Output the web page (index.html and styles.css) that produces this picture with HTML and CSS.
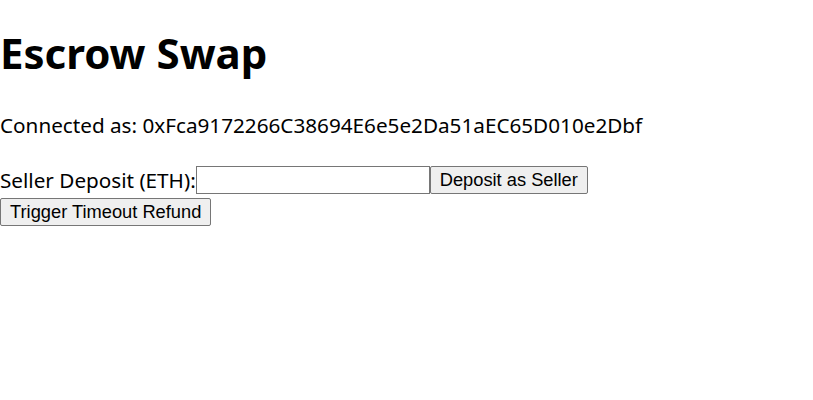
FILE: index.html
```html
<!DOCTYPE html>
<html>
<head>
<meta charset="utf-8">
<link rel="stylesheet" href="styles.css">
</head>
<body>
<div class="app">
  <h1 class="title">Escrow Swap</h1>
  <p class="account">Connected as: 0xFca9172266C38694E6e5e2Da51aEC65D010e2Dbf</p>
  <div class="row">
    <label class="label">Seller Deposit (ETH):</label><input class="field" type="text"><button class="btn">Deposit as Seller</button>
  </div>
  <div class="row">
    <button class="btn">Trigger Timeout Refund</button>
  </div>
</div>
</body>
</html>
```
FILE: styles.css
```css
body {
  margin: 0;
  font-family: "Noto Sans", sans-serif;
  font-size: 20.7px;
  color: #000;
  background: #fff;
}
.title {
  font-size: 42px;
  font-weight: bold;
  margin: 24px 0 30px;
}
.account {
  margin: 0 0 27px;
}
.row {
  display: flex;
  align-items: center;
}
.label {
  white-space: nowrap;
}
.field {
  width: 234px;
  height: 28px;
  box-sizing: border-box;
  border: 1px solid #767676;
  margin: 0;
  padding: 1px 2px;
}
.btn {
  font-family: "Liberation Sans", Arial, sans-serif;
  font-size: 18.3px;
  height: 28px;
  box-sizing: border-box;
  margin: 0;
  padding: 1px 9px;
  border: 1px solid #767676;
  border-radius: 2px;
  background: #efefef;
  color: #000;
}
.row + .row {
  margin-top: 4px;
}
```
